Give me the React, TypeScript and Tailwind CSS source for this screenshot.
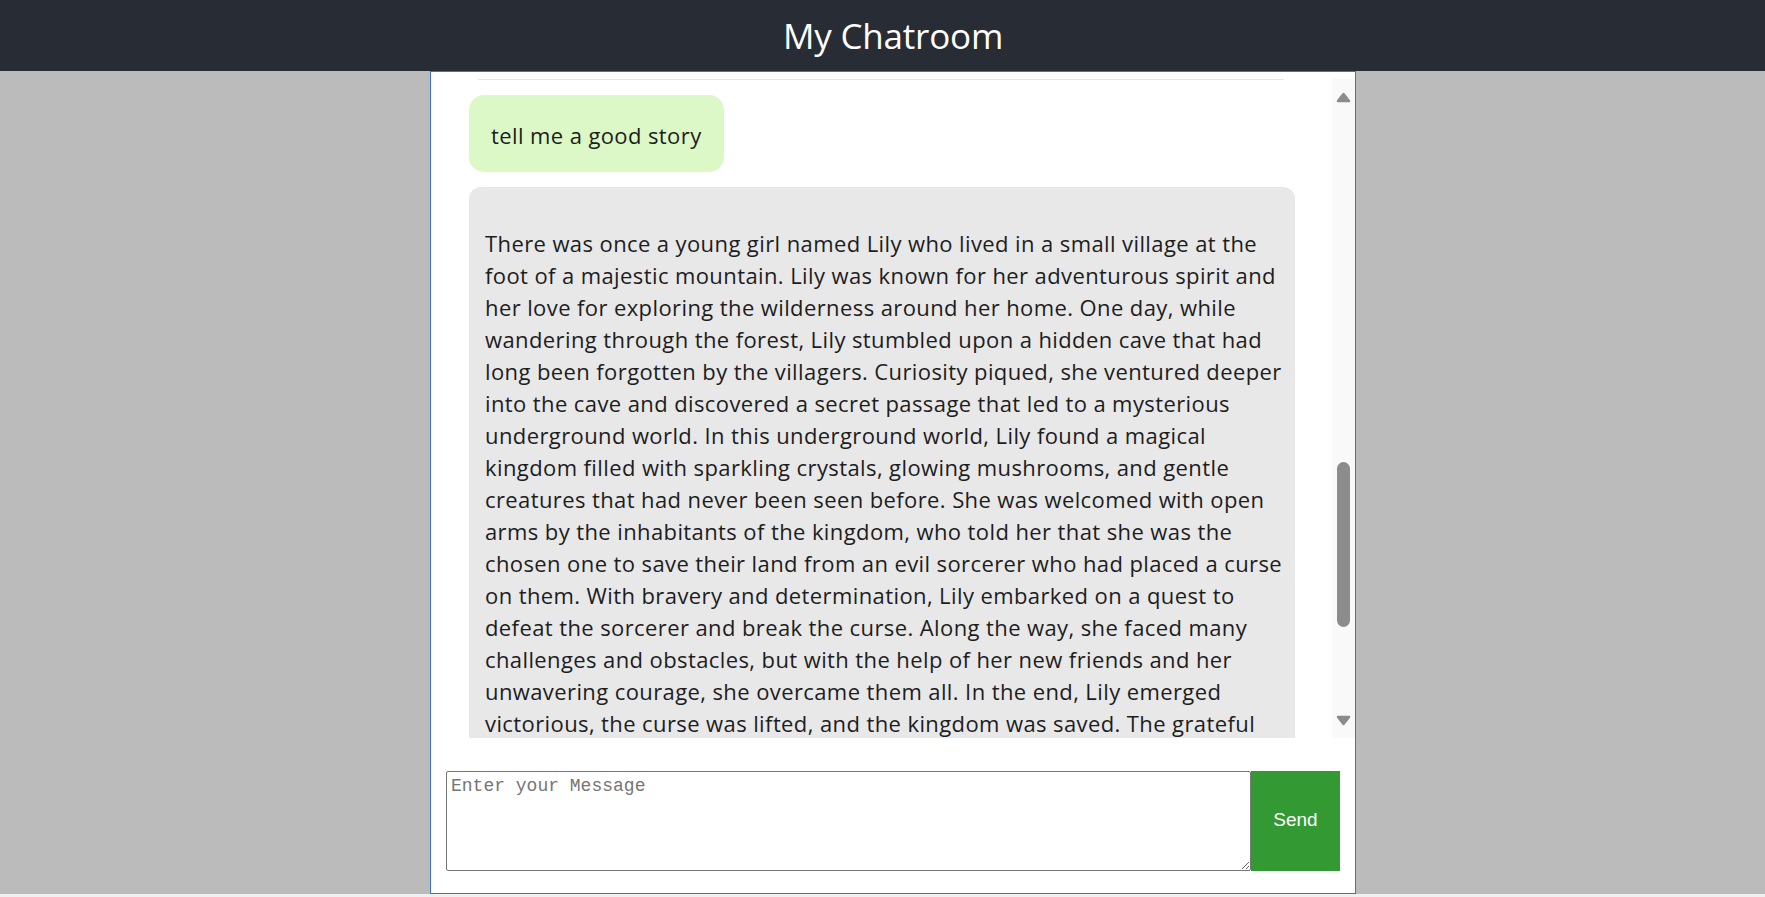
import React from "react";

const lines = [
  "There was once a young girl named Lily who lived in a small village at the",
  "foot of a majestic mountain. Lily was known for her adventurous spirit and",
  "her love for exploring the wilderness around her home. One day, while",
  "wandering through the forest, Lily stumbled upon a hidden cave that had",
  "long been forgotten by the villagers. Curiosity piqued, she ventured deeper",
  "into the cave and discovered a secret passage that led to a mysterious",
  "underground world. In this underground world, Lily found a magical",
  "kingdom filled with sparkling crystals, glowing mushrooms, and gentle",
  "creatures that had never been seen before. She was welcomed with open",
  "arms by the inhabitants of the kingdom, who told her that she was the",
  "chosen one to save their land from an evil sorcerer who had placed a curse",
  "on them. With bravery and determination, Lily embarked on a quest to",
  "defeat the sorcerer and break the curse. Along the way, she faced many",
  "challenges and obstacles, but with the help of her new friends and her",
  "unwavering courage, she overcame them all. In the end, Lily emerged",
  "victorious, the curse was lifted, and the kingdom was saved. The grateful",
  "villagers celebrated Lily's bravery, and she returned home as a hero,",
  "knowing that the greatest adventures are the ones we are brave enough",
  "to take.",
];

function Arrow({ down }: { down?: boolean }) {
  return (
    <svg width="15" height="11" viewBox="0 0 15 11" className="block">
      <path
        d={down ? "M2 2 L13 2 L7.5 9 Z" : "M2 9 L13 9 L7.5 2 Z"}
        fill="#8b8b8b"
        stroke="#8b8b8b"
        strokeWidth="2.5"
        strokeLinejoin="round"
      />
    </svg>
  );
}

export default function App() {
  return (
    <div
      className="w-full h-[897px] bg-[#f0f0f0] overflow-hidden"
      style={{ fontFamily: '"Open Sans", "Noto Sans", sans-serif' }}
    >
      <header className="h-[71px] bg-[#282c34] flex items-center justify-center pl-[21px]">
        <h1 className="text-white text-[35px] leading-none font-normal tracking-[-0.2px]">
          My Chatroom
        </h1>
      </header>
      <main className="h-[823px] bg-[#bbbbbb] pl-[430px]">
        <section className="w-[926px] h-[823px] bg-white border border-[#3b6fd6] flex flex-col pt-[7px]">
          <div className="h-[659px] flex overflow-hidden">
            <div className="flex-1 overflow-hidden pl-[38px] pr-[37px]">
              <div className="h-px bg-[#e6e6e6] ml-[9px] mr-[11px]" />
              <div className="mt-[15px] w-fit bg-[#dcf8c6] rounded-[15px] px-[22px] pt-[24px] pb-[21px] text-[22px] leading-[32px] text-[#1d1d1d] tracking-[0.4px]">
                tell me a good story
              </div>
              <div className="mt-[15px] bg-[#e8e8e8] rounded-[12px] px-[16px] pt-[8px] pb-[16px] text-[22px] leading-[32px] text-[#1d1d1d] tracking-[0.4px]">
                <div className="h-[32px]" />
                {lines.map((l, i) => (
                  <div key={i} className="whitespace-nowrap">
                    {l}
                  </div>
                ))}
              </div>
            </div>
            <div className="w-[23px] bg-[#f9f9f9] flex flex-col items-center">
              <div className="mt-[13px]">
                <Arrow />
              </div>
              <div className="mt-[359px] w-[13px] h-[165px] rounded-full bg-[#8c8c8c]" />
              <div className="mt-auto mb-[12px]">
                <Arrow down />
              </div>
            </div>
          </div>
          <div className="flex pl-[15px] pr-[15px] mt-[33px]">
            <textarea
              placeholder="Enter your Message"
              className="w-[805px] h-[100px] border border-[#767676] rounded-[2px] px-[4px] pt-[3px] pb-[2px] text-[18px] leading-[22px] placeholder:text-[#757575] outline-none resize"
              style={{ fontFamily: '"Liberation Mono", monospace' }}
            />
            <button
              className="w-[89px] h-[100px] bg-[#339933] text-white text-[19px] pb-[1px]"
              style={{ fontFamily: '"Liberation Sans", Arial, sans-serif' }}
            >
              Send
            </button>
          </div>
        </section>
      </main>
    </div>
  );
}
